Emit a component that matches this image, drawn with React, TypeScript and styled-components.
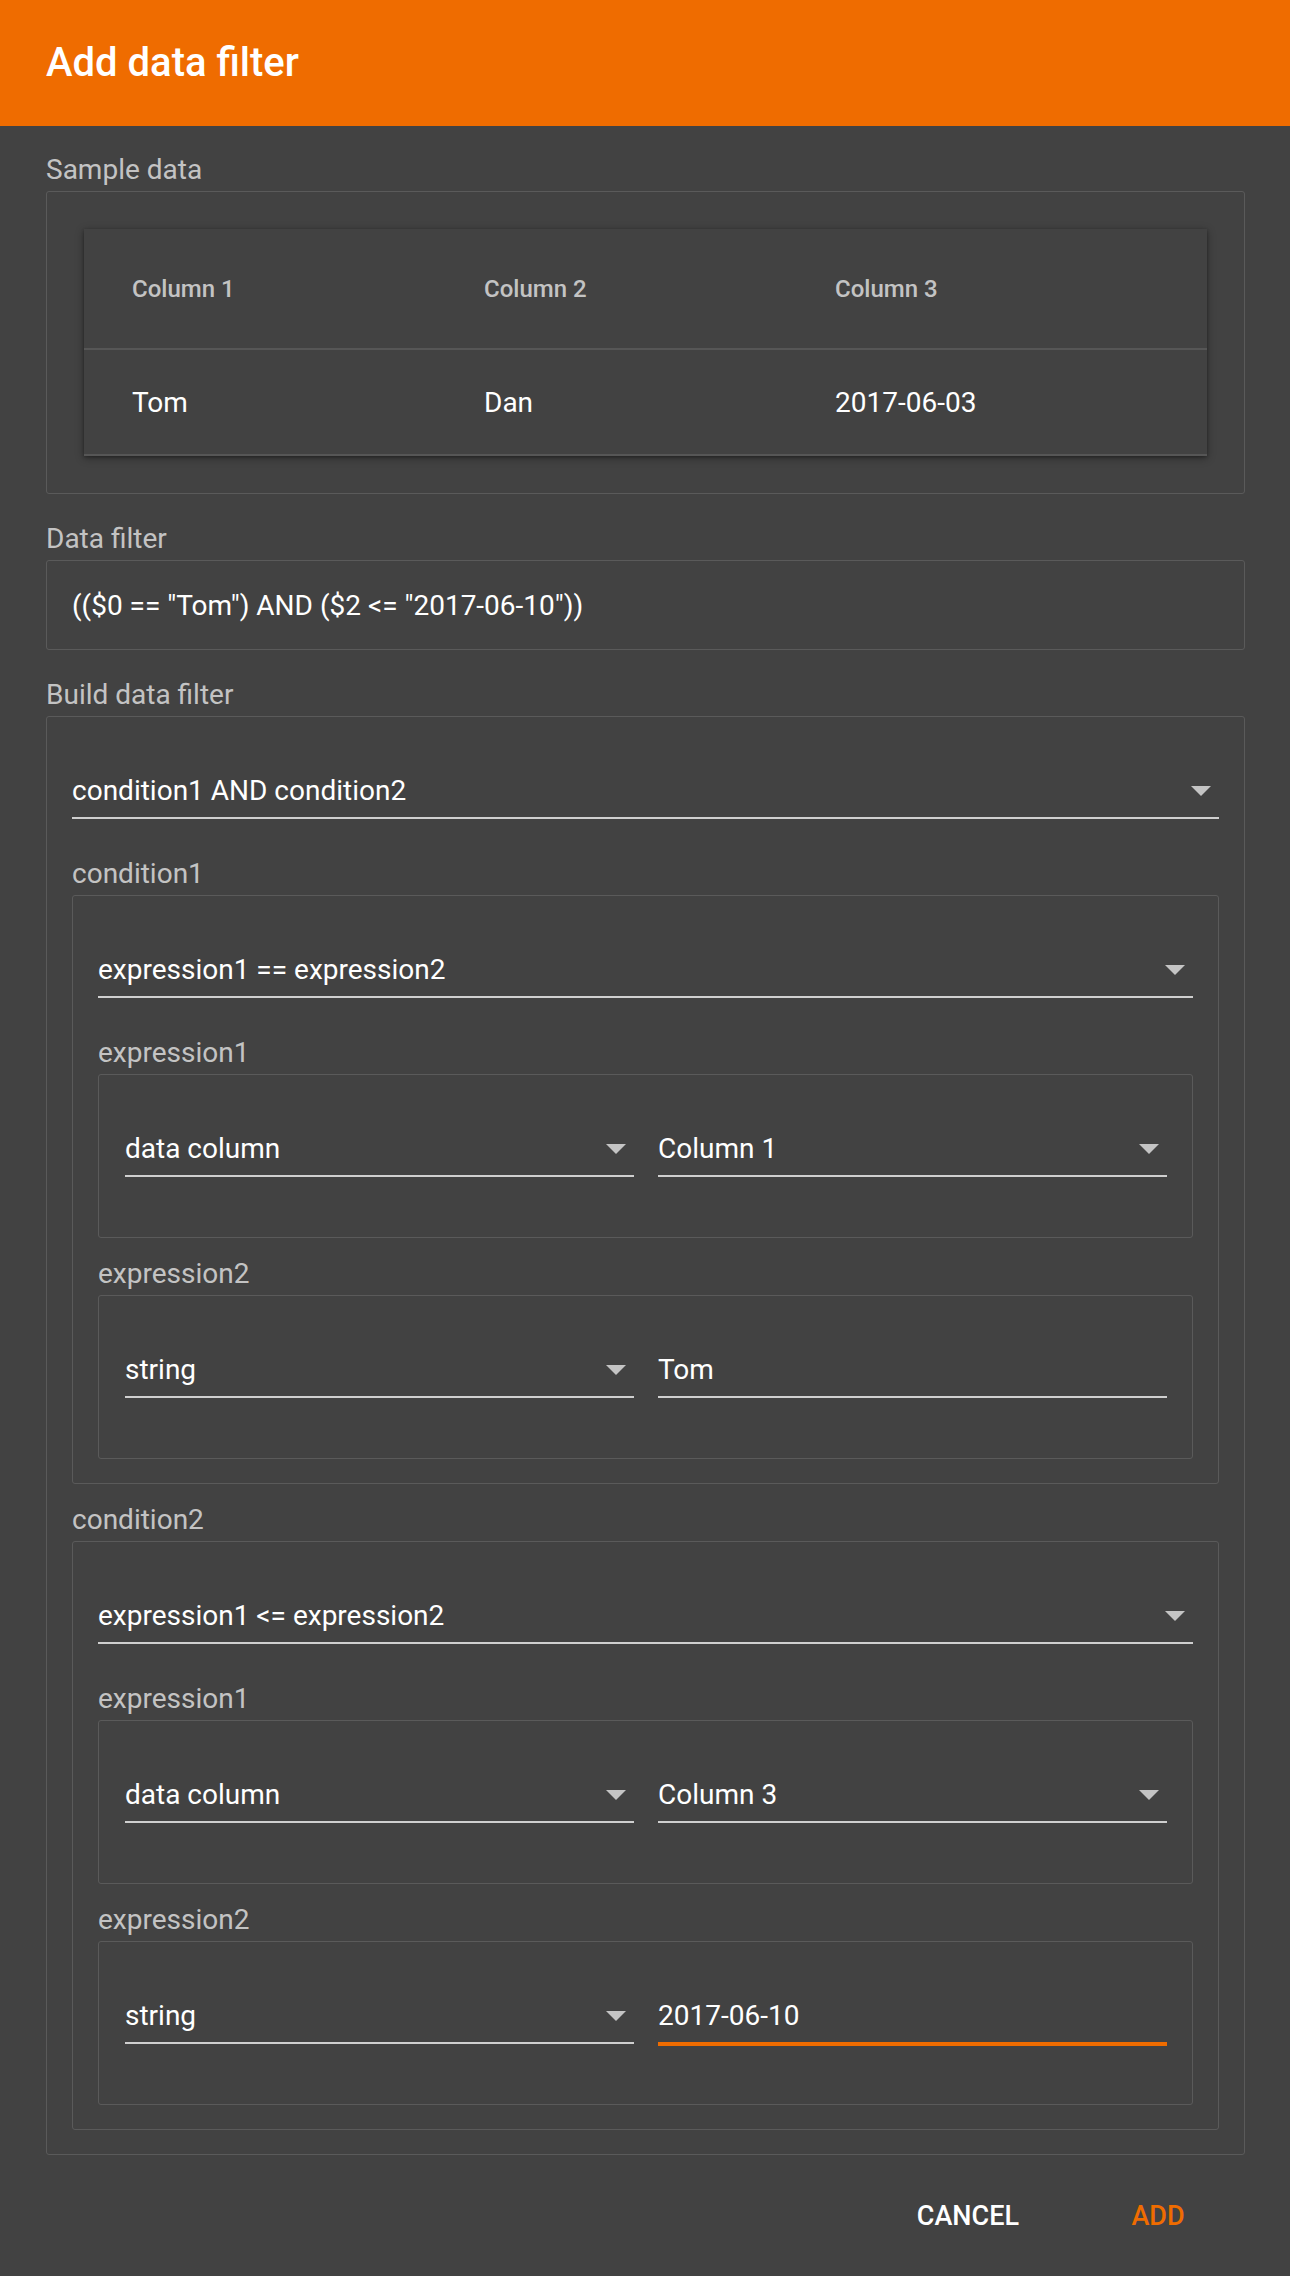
import React from "react";
import styled, { createGlobalStyle } from "styled-components";

const GlobalStyle = createGlobalStyle`
  html, body {
    margin: 0;
    padding: 0;
    background: #424242;
  }
  body {
    font-family: Roboto, "Noto Sans", "Liberation Sans", sans-serif;
    -webkit-font-smoothing: antialiased;
  }
  * { box-sizing: border-box; }
`;

const ORANGE = "#EF6C00";
const LABEL = "rgba(255,255,255,0.7)";
const BORDER = "#5a5a5a";

const Dialog = styled.div`
  width: 1290px;
  background: #424242;
  color: #fff;
`;

const Header = styled.header`
  background: ${ORANGE};
  padding: 39px 46px;
`;

const Title = styled.h1`
  margin: 0;
  font-size: 40px;
  line-height: 48px;
  font-weight: 500;
  color: #fff;
`;

const Content = styled.main`
  display: flex;
  flex-direction: column;
  gap: 29px;
  padding: 28px 45px 0 46px;
`;

const Section = styled.section``;

const Group = styled.section`
  & + & {
    margin-top: 20px;
  }
`;

const GroupLabel = styled.div`
  font-size: 28px;
  line-height: 32px;
  color: ${LABEL};
  margin-bottom: 5px;
`;

const Frame = styled.div<{ $variant?: "sample" | "text" | "nested" | "expr" }>`
  border: 1px solid ${BORDER};
  border-radius: 3px;
  padding: ${({ $variant }) =>
    $variant === "sample"
      ? "37px"
      : $variant === "text"
      ? "29px 25px 27px"
      : $variant === "expr"
      ? "0 25px 25px 26px"
      : "0 25px 24px"};
`;

const FilterText = styled.div`
  font-size: 28px;
  line-height: 32px;
  color: #fff;
`;

/* Table */
const Card = styled.div`
  background: #424242;
  box-shadow: 0 2px 8px rgba(0, 0, 0, 0.38), 0 1px 3px rgba(0, 0, 0, 0.25);
`;

const TableRow = styled.div<{ $head?: boolean }>`
  display: grid;
  grid-template-columns: 352px 351px 1fr;
  align-items: center;
  padding-left: 48px;
  height: ${({ $head }) => ($head ? "121px" : "106px")};
  border-bottom: 2px solid #565656;
`;

const HeadCell = styled.div`
  font-size: 24px;
  font-weight: 500;
  color: ${LABEL};
`;

const Cell = styled.div`
  font-size: 28px;
  color: #fff;
`;

/* Fields */
const FieldRow = styled.div`
  display: flex;
  gap: 24px;
  margin-bottom: 39px;
  &:last-child {
    margin-bottom: 35px;
  }
`;

const Field = styled.div<{ $focused?: boolean }>`
  flex: 1;
  display: flex;
  align-items: center;
  padding: 58px 0 10px;
  font-size: 28px;
  line-height: 32px;
  color: #fff;
  border-bottom: 2px solid ${({ $focused }) => ($focused ? ORANGE : "#cfcfcf")};
  box-shadow: ${({ $focused }) => ($focused ? `0 2px 0 ${ORANGE}` : "none")};
`;

const FieldValue = styled.span`
  flex: 1;
  white-space: nowrap;
`;

const Arrow = styled.svg`
  flex: none;
  width: 20px;
  height: 10px;
  margin-right: 8px;
`;

const Actions = styled.footer`
  display: flex;
  justify-content: flex-end;
  gap: 34px;
  padding: 29px 55px 27px 0;
`;

const Button = styled.button<{ $primary?: boolean }>`
  height: 63px;
  min-width: 154px;
  padding: 0 28px;
  background: none;
  border: none;
  font-family: Roboto, "Liberation Sans", sans-serif;
  font-size: 27px;
  font-weight: 500;
  text-transform: uppercase;
  color: ${({ $primary }) => ($primary ? ORANGE : "#fff")};
  cursor: pointer;
`;

function SelectField({ value }: { value: string }) {
  return (
    <Field>
      <FieldValue>{value}</FieldValue>
      <Arrow viewBox="0 0 20 10">
        <polygon points="0,0 20,0 10,10" fill="#c4c4c4" />
      </Arrow>
    </Field>
  );
}

function TextField({ value, focused }: { value: string; focused?: boolean }) {
  return (
    <Field $focused={focused}>
      <FieldValue>{value}</FieldValue>
    </Field>
  );
}

function Expression({
  label,
  type,
  value,
  isColumn,
  focused,
}: {
  label: string;
  type: string;
  value: string;
  isColumn?: boolean;
  focused?: boolean;
}) {
  return (
    <Group>
      <GroupLabel>{label}</GroupLabel>
      <Frame $variant="expr">
        <FieldRow>
          <SelectField value={type} />
          {isColumn ? (
            <SelectField value={value} />
          ) : (
            <TextField value={value} focused={focused} />
          )}
        </FieldRow>
      </Frame>
    </Group>
  );
}

function Condition({
  label,
  op,
  column,
  value,
  focused,
}: {
  label: string;
  op: string;
  column: string;
  value: string;
  focused?: boolean;
}) {
  return (
    <Group>
      <GroupLabel>{label}</GroupLabel>
      <Frame $variant="nested">
        <FieldRow>
          <SelectField value={op} />
        </FieldRow>
        <Expression label="expression1" type="data column" value={column} isColumn />
        <Expression label="expression2" type="string" value={value} focused={focused} />
      </Frame>
    </Group>
  );
}

export default function App() {
  return (
    <>
      <GlobalStyle />
      <Dialog>
        <Header>
          <Title>Add data filter</Title>
        </Header>
        <Content>
          <Section>
            <GroupLabel>Sample data</GroupLabel>
            <Frame $variant="sample">
              <Card>
                <TableRow $head>
                  <HeadCell>Column 1</HeadCell>
                  <HeadCell>Column 2</HeadCell>
                  <HeadCell>Column 3</HeadCell>
                </TableRow>
                <TableRow>
                  <Cell>Tom</Cell>
                  <Cell>Dan</Cell>
                  <Cell>2017-06-03</Cell>
                </TableRow>
              </Card>
            </Frame>
          </Section>
          <Section>
            <GroupLabel>Data filter</GroupLabel>
            <Frame $variant="text">
              <FilterText>(($0 == "Tom") AND ($2 &lt;= "2017-06-10"))</FilterText>
            </Frame>
          </Section>
          <Section>
            <GroupLabel>Build data filter</GroupLabel>
            <Frame $variant="nested">
              <FieldRow>
                <SelectField value="condition1 AND condition2" />
              </FieldRow>
              <Condition
                label="condition1"
                op="expression1 == expression2"
                column="Column 1"
                value="Tom"
              />
              <Condition
                label="condition2"
                op="expression1 <= expression2"
                column="Column 3"
                value="2017-06-10"
                focused
              />
            </Frame>
          </Section>
        </Content>
        <Actions>
          <Button>Cancel</Button>
          <Button $primary>Add</Button>
        </Actions>
      </Dialog>
    </>
  );
}
